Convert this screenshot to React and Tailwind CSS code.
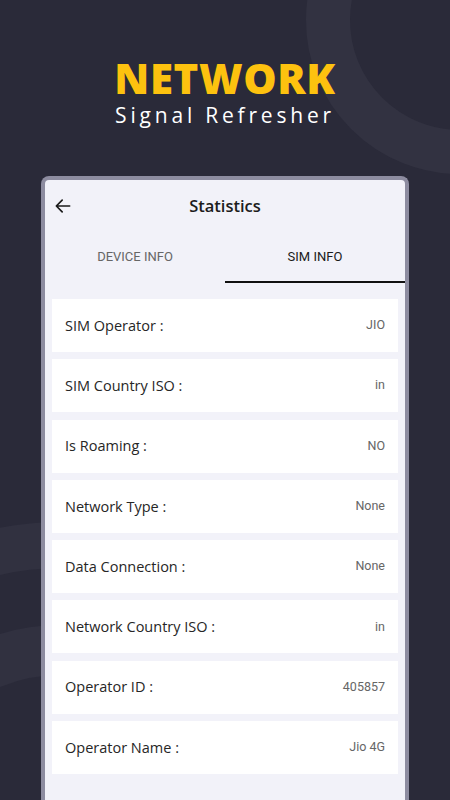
import React from "react";

const rows = [
  { label: "SIM Operator :", value: "JIO" },
  { label: "SIM Country ISO :", value: "in" },
  { label: "Is Roaming :", value: "NO" },
  { label: "Network Type :", value: "None" },
  { label: "Data Connection :", value: "None" },
  { label: "Network Country ISO :", value: "in" },
  { label: "Operator ID :", value: "405857" },
  { label: "Operator Name :", value: "Jio 4G" },
];

export default function App() {
  return (
    <div className="relative flex h-[800px] w-[450px] flex-col overflow-hidden bg-[#2a2a39] font-['Open_Sans',sans-serif]">
      {/* background rings */}
      <div className="absolute left-[306px] top-[-134px] h-[308px] w-[308px] rounded-full border-[44px] border-[#323241]" />
      <div className="absolute left-[-248px] top-[522px] h-[616px] w-[616px] rounded-full border-[46px] border-[#313140]" />
      <div className="absolute left-[-145px] top-[625px] h-[410px] w-[410px] rounded-full border-[50px] border-[#313140]" />

      {/* Title */}
      <div className="relative flex flex-col items-center pt-[57px]">
        <h1 className="text-[42px] font-extrabold leading-[42px] tracking-[0.6px] text-[#fdc20f]">
          NETWORK
        </h1>
        <p className="mt-[5px] text-[21px] leading-[22px] tracking-[3.8px] text-white">
          Signal Refresher
        </p>
      </div>

      {/* Phone frame */}
      <div className="relative mx-[41px] mt-[50px] flex flex-1 flex-col rounded-t-[8px] border-4 border-b-0 border-[#8d8ca0] bg-[#f2f2f9]">
        {/* Header */}
        <div className="relative flex h-[52px] items-center justify-center">
          <svg
            viewBox="0 0 24 24"
            fill="none"
            stroke="#1a1a1a"
            strokeWidth="2"
            className="absolute left-[8px] h-[20px] w-[20px]"
          >
            <path d="M20 12H4M11 5l-7 7 7 7" strokeLinecap="round" strokeLinejoin="round" />
          </svg>
          <span className="text-[16.5px] font-semibold text-[#1c1c1c]">Statistics</span>
        </div>

        {/* Tabs */}
        <div className="flex font-['Roboto',sans-serif] text-[13px]">
          <div className="flex flex-1 flex-col">
            <div className="flex h-[49px] items-center justify-center text-[#666]">DEVICE INFO</div>
            <div className="h-[2px]" />
          </div>
          <div className="flex flex-1 flex-col">
            <div className="flex h-[49px] items-center justify-center text-[#1a1a1a]">SIM INFO</div>
            <div className="h-[2px] bg-[#111]" />
          </div>
        </div>

        {/* Rows */}
        <div className="flex flex-col gap-[7.3px] px-[7px] pt-[16px]">
          {rows.map((row) => (
            <div
              key={row.label}
              className="flex h-[53px] items-center justify-between bg-white px-[13px]"
            >
              <span className="text-[14.5px] text-[#262626]">{row.label}</span>
              <span className="font-['Roboto',sans-serif] text-[12.5px] text-[#666]">
                {row.value}
              </span>
            </div>
          ))}
        </div>
      </div>
    </div>
  );
}
